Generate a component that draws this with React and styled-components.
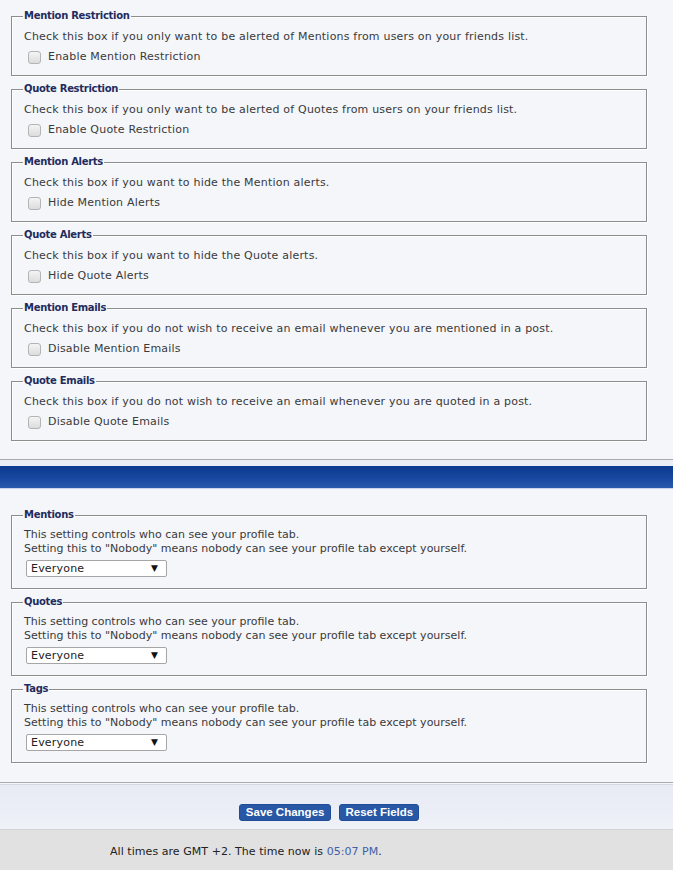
import React from "react";
import styled, { createGlobalStyle } from "styled-components";

const GlobalStyle = createGlobalStyle`
  html, body {
    margin: 0;
    padding: 0;
    background-color: #e1e1e1;
  }
  body {
    font-family: "DejaVu Sans", Verdana, sans-serif;
    font-size: 11px;
    color: #333333;
  }
`;

const Panel = styled.section`
  background-color: #f4f6fa;
  padding: ${(p) => (p.$top ? "9px 26px 18px 11px" : "19px 26px 19px 11px")};
  border-bottom: 1px solid #a9abb0;
  display: flex;
  flex-direction: column;
  gap: 6px;
`;

const Fieldset = styled.fieldset`
  margin: 0;
  padding: 0 10px 11px 12px;
  border: 1px solid #8d8d8d;
  box-shadow: 1px 1px 0 #ffffff, inset 1px 1px 0 #ffffff;
  min-width: 0;
`;

const Legend = styled.legend`
  padding: 0 1px;
  margin-left: -1px;
  font-family: "DejaVu Sans", Verdana, sans-serif;
  font-weight: bold;
  font-size: 10px;
  line-height: 14px;
  color: #222b5c;
  letter-spacing: -0.3px;
`;

const Description = styled.div`
  margin-top: ${(p) => (p.$gap ? p.$gap : "7px")};
  line-height: 14px;
  letter-spacing: ${(p) => (p.$tight ? "0px" : "0.2px")};
  color: #3a3a3a;
`;

const CheckRow = styled.label`
  margin-top: 6px;
  display: flex;
  align-items: center;
  gap: 7px;
  padding-left: 4px;
  line-height: 14px;
  letter-spacing: 0.2px;
  color: #3a3a3a;
`;

const Checkbox = styled.input.attrs({ type: "checkbox" })`
  appearance: none;
  margin: 0;
  width: 13px;
  height: 13px;
  border: 1px solid #b4b4b4;
  border-radius: 3px;
  background: linear-gradient(#f4f4f4, #dcdcdc);
  box-sizing: border-box;
`;

const SelectWrap = styled.div`
  position: relative;
  margin: 4px 0 0 2px;
  width: 141px;
  height: 17px;
`;

const Select = styled.select`
  appearance: none;
  width: 100%;
  height: 100%;
  margin: 0;
  padding: 0 0 0 4px;
  box-sizing: border-box;
  border: 1px solid #a6a6a6;
  border-radius: 2px;
  background-color: #ffffff;
  font-family: "DejaVu Sans", Verdana, sans-serif;
  font-size: 11px;
  letter-spacing: 0.2px;
  color: #222222;
`;

const Arrow = styled.span`
  position: absolute;
  right: 9px;
  top: 2px;
  font-size: 9px;
  line-height: 13px;
  color: #111111;
  pointer-events: none;
`;

const Divider = styled.div`
  height: 6px;
  background-color: #eceef5;
`;

const BlueBar = styled.div`
  height: 22px;
  background: linear-gradient(#0b3a8e, #17479f 55%, #2a5aae);
  border-bottom: 1px solid #c9d3ec;
`;

const ButtonBar = styled.div`
  height: 46px;
  box-sizing: border-box;
  padding: 20px 15px 0 0;
  display: flex;
  justify-content: center;
  gap: 8px;
  background: linear-gradient(#e8eaf4, #eef1f7);
  border-top: 1px solid #f6f7fb;
  box-shadow: inset 0 6px 0 -5px #d6d9e2;
`;

const Button = styled.button`
  height: 17px;
  margin: 0;
  padding: 0 ${(p) => (p.$narrow ? "5px" : "6px")};
  border: 1px solid #1e4c97;
  border-radius: 3px;
  background-color: #2857a5;
  color: #ffffff;
  font-family: "Liberation Sans", Arial, sans-serif;
  font-weight: bold;
  font-size: 11.5px;
  line-height: 15px;
`;

const Footer = styled.footer`
  height: 41px;
  box-sizing: border-box;
  border-top: 1px solid #d2d2d2;
  background-color: #e1e1e1;
  padding: 15px 0 0 110px;
  font-family: "DejaVu Sans", Tahoma, sans-serif;
  font-size: 11px;
  line-height: 14px;
  letter-spacing: 0.05px;
  color: #222222;
`;

const Time = styled.span`
  color: #4060a8;
`;

const alerts = [
  {
    title: "Mention Restriction",
    text: "Check this box if you only want to be alerted of Mentions from users on your friends list.",
    label: "Enable Mention Restriction",
  },
  {
    title: "Quote Restriction",
    text: "Check this box if you only want to be alerted of Quotes from users on your friends list.",
    label: "Enable Quote Restriction",
  },
  {
    title: "Mention Alerts",
    text: "Check this box if you want to hide the Mention alerts.",
    label: "Hide Mention Alerts",
  },
  {
    title: "Quote Alerts",
    text: "Check this box if you want to hide the Quote alerts.",
    label: "Hide Quote Alerts",
  },
  {
    title: "Mention Emails",
    text: "Check this box if you do not wish to receive an email whenever you are mentioned in a post.",
    label: "Disable Mention Emails",
  },
  {
    title: "Quote Emails",
    text: "Check this box if you do not wish to receive an email whenever you are quoted in a post.",
    label: "Disable Quote Emails",
  },
];

const privacy = ["Mentions", "Quotes", "Tags"];

function App() {
  return (
    <>
      <GlobalStyle />
      <Panel $top>
        {alerts.map((a) => (
          <Fieldset key={a.title}>
            <Legend>{a.title}</Legend>
            <Description>{a.text}</Description>
            <CheckRow>
              <Checkbox />
              {a.label}
            </CheckRow>
          </Fieldset>
        ))}
      </Panel>
      <Divider />
      <BlueBar />
      <Panel>
        {privacy.map((title) => (
          <Fieldset key={title}>
            <Legend>{title}</Legend>
            <Description $gap="6px" $tight>
              This setting controls who can see your profile tab.
              <br />
              Setting this to "Nobody" means nobody can see your profile tab except yourself.
            </Description>
            <SelectWrap>
              <Select defaultValue="everyone">
                <option value="everyone">Everyone</option>
                <option value="friends">Friends</option>
                <option value="nobody">Nobody</option>
              </Select>
              <Arrow>▼</Arrow>
            </SelectWrap>
          </Fieldset>
        ))}
      </Panel>
      <ButtonBar>
        <Button>Save Changes</Button>
        <Button $narrow>Reset Fields</Button>
      </ButtonBar>
      <Footer>
        All times are GMT +2. The time now is <Time>05:07 PM</Time>.
      </Footer>
    </>
  );
}

export default App;
